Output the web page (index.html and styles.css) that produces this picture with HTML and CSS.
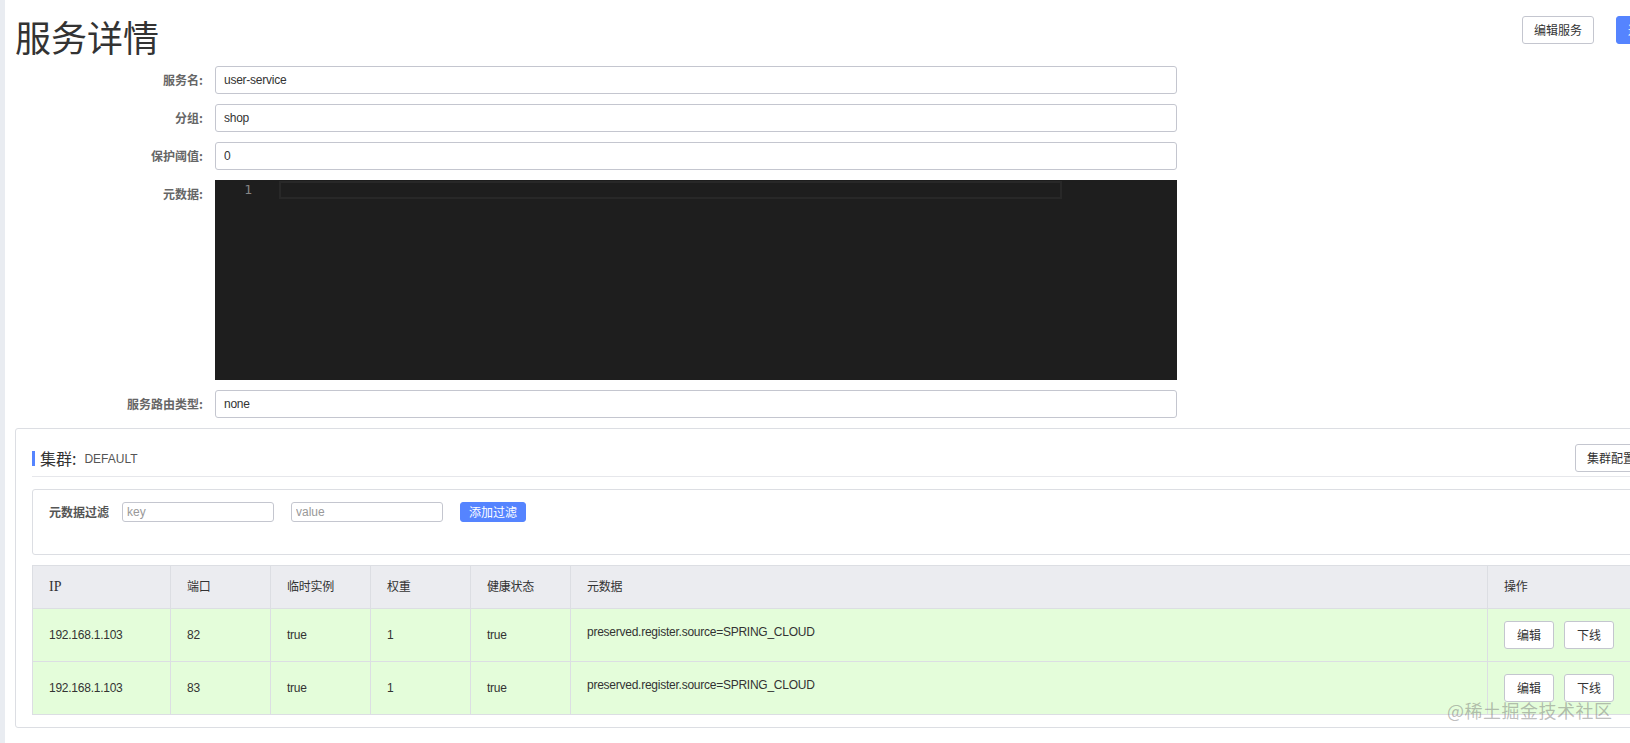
FILE: index.html
```html
<!DOCTYPE html>
<html lang="zh-CN">
<head>
<meta charset="utf-8">
<title>服务详情</title>
<link rel="stylesheet" href="styles.css">
</head>
<body>
<div class="layout">
  <div class="sidebar"></div>
  <main class="main">
    <header class="page-header">
      <h1 class="page-title">服务详情</h1>
      <div class="header-actions">
        <button class="btn" type="button">编辑服务</button>
        <button class="btn btn-primary" type="button">返回</button>
      </div>
    </header>

    <form class="detail-form">
      <div class="form-row">
        <label class="form-label">服务名:</label>
        <input class="text-input" value="user-service" readonly>
      </div>
      <div class="form-row">
        <label class="form-label">分组:</label>
        <input class="text-input" value="shop" readonly>
      </div>
      <div class="form-row">
        <label class="form-label">保护阈值:</label>
        <input class="text-input" value="0" readonly>
      </div>
      <div class="form-row">
        <label class="form-label">元数据:</label>
        <div class="editor">
          <div class="editor-gutter">1</div>
          <div class="editor-lines">
            <div class="editor-current-line"></div>
          </div>
        </div>
      </div>
      <div class="form-row">
        <label class="form-label">服务路由类型:</label>
        <input class="text-input" value="none" readonly>
      </div>
    </form>

    <section class="cluster-panel">
      <div class="cluster-header">
        <div class="cluster-title">
          <span class="title-bar"></span>
          <span class="title-main">集群:</span>
          <span class="title-sub">DEFAULT</span>
        </div>
        <button class="btn" type="button">集群配置</button>
      </div>

      <div class="filter-box">
        <span class="filter-label">元数据过滤</span>
        <input class="filter-input" placeholder="key">
        <input class="filter-input" placeholder="value">
        <button class="btn-small" type="button">添加过滤</button>
      </div>

      <table class="instance-table">
        <colgroup>
          <col class="col-ip">
          <col class="col-std">
          <col class="col-std">
          <col class="col-std">
          <col class="col-std">
          <col class="col-meta">
          <col class="col-ops">
        </colgroup>
        <thead>
          <tr>
            <th class="th-serif">IP</th>
            <th>端口</th>
            <th>临时实例</th>
            <th>权重</th>
            <th>健康状态</th>
            <th>元数据</th>
            <th>操作</th>
          </tr>
        </thead>
        <tbody>
          <tr class="row-healthy">
            <td>192.168.1.103</td>
            <td>82</td>
            <td>true</td>
            <td>1</td>
            <td>true</td>
            <td class="td-meta">preserved.register.source=SPRING_CLOUD</td>
            <td class="td-ops"><button class="btn btn-op" type="button">编辑</button><button class="btn btn-op" type="button">下线</button></td>
          </tr>
          <tr class="row-healthy">
            <td>192.168.1.103</td>
            <td>83</td>
            <td>true</td>
            <td>1</td>
            <td>true</td>
            <td class="td-meta">preserved.register.source=SPRING_CLOUD</td>
            <td class="td-ops"><button class="btn btn-op" type="button">编辑</button><button class="btn btn-op" type="button">下线</button></td>
          </tr>
        </tbody>
      </table>
    </section>
  </main>
</div>
<div class="watermark">@稀土掘金技术社区</div>
</body>
</html>
```

FILE: styles.css
```css
html, body {
  margin: 0;
  padding: 0;
  overflow: hidden;
  background: #fff;
}

body {
  font-family: "Liberation Sans", "Noto Sans CJK SC", sans-serif;
  font-size: 12px;
  color: #333;
  position: relative;
  min-height: 743px;
}

.layout {
  display: flex;
  min-height: 743px;
}

.sidebar {
  width: 5px;
  flex: 0 0 5px;
  background: #e9ecf1;
}

.main {
  flex: 0 0 1649px;
  width: 1649px;
  padding-left: 10px;
}

/* header */
.page-header {
  display: flex;
  justify-content: space-between;
  align-items: flex-start;
  padding-top: 16px;
}

.page-title {
  margin: 2px 0 0;
  font-family: "Noto Sans CJK SC", sans-serif;
  font-size: 36px;
  line-height: 36px;
  font-weight: normal;
  color: #333;
}

.header-actions {
  display: flex;
  gap: 22px;
}

.btn {
  height: 28px;
  padding: 0 11px;
  border: 1px solid #c4c6cf;
  border-radius: 3px;
  background: #fff;
  color: #333;
  font-family: "Noto Sans CJK SC", sans-serif;
  font-size: 12px;
  line-height: 26px;
  cursor: pointer;
  box-sizing: border-box;
}

.btn-primary {
  background: #5584ff;
  border-color: #5584ff;
  color: #fff;
}

/* form */
.detail-form {
  margin-top: 12px;
}

.form-row {
  display: flex;
  align-items: flex-start;
  margin-bottom: 10px;
}

.form-label {
  width: 200px;
  flex: 0 0 200px;
  box-sizing: border-box;
  padding-right: 12px;
  text-align: right;
  line-height: 28px;
  color: #666;
  font-weight: bold;
  font-family: "Noto Sans CJK SC", sans-serif;
}

.text-input {
  width: 962px;
  height: 28px;
  box-sizing: border-box;
  padding: 0 8px;
  border: 1px solid #c4c6cf;
  border-radius: 3px;
  font-family: "Liberation Sans", "Noto Sans CJK SC", sans-serif;
  font-size: 12px;
  letter-spacing: -0.25px;
  color: #333;
  outline: none;
  background: #fff;
}

.editor {
  width: 962px;
  height: 200px;
  background: #1e1e1e;
  display: flex;
}

.editor-gutter {
  width: 64px;
  flex: 0 0 64px;
  box-sizing: border-box;
  padding: 1px 27px 0 0;
  text-align: right;
  font-family: "DejaVu Sans Mono", monospace;
  font-size: 13px;
  line-height: 18px;
  color: #858585;
}

.editor-lines {
  padding-top: 1px;
}

.editor-current-line {
  width: 783px;
  height: 18px;
  box-sizing: border-box;
  border: 2px solid #282828;
}

/* cluster panel */
.cluster-panel {
  border: 1px solid #dcdee3;
  border-radius: 3px;
  padding: 15px 16px 12px;
}

.cluster-header {
  display: flex;
  justify-content: space-between;
  align-items: flex-start;
  padding-bottom: 4px;
  border-bottom: 1px solid #e6e7eb;
}

.cluster-title {
  display: flex;
  align-items: center;
  height: 24px;
  margin-top: 2px;
}

.title-bar {
  width: 3px;
  height: 15px;
  background: #5584ff;
  margin-right: 5px;
}

.title-main {
  font-family: "Noto Sans CJK SC", sans-serif;
  font-size: 16px;
  color: #333;
}

.title-sub {
  margin-left: 8px;
  margin-top: 2px;
  font-size: 12px;
  color: #555;
}

.filter-box {
  margin-top: 12px;
  border: 1px solid #dcdee3;
  border-radius: 3px;
  padding: 12px 16px 32px;
  display: flex;
  align-items: center;
}

.filter-label {
  line-height: 20px;
  color: #555;
  font-weight: bold;
  font-family: "Noto Sans CJK SC", sans-serif;
  margin-right: 13px;
}

.filter-input {
  width: 152px;
  height: 20px;
  box-sizing: border-box;
  padding: 0 4px;
  border: 1px solid #c4c6cf;
  border-radius: 3px;
  font-family: "Liberation Sans", sans-serif;
  font-size: 12px;
  color: #333;
  margin-right: 17px;
  outline: none;
}

.filter-input::placeholder {
  color: #999;
}

.btn-small {
  height: 20px;
  padding: 0 8px;
  border: 1px solid #5584ff;
  border-radius: 3px;
  background: #5584ff;
  color: #fff;
  font-family: "Noto Sans CJK SC", sans-serif;
  font-size: 12px;
  line-height: 18px;
  box-sizing: border-box;
}

/* table */
.instance-table {
  margin-top: 10px;
  width: 100%;
  border-collapse: collapse;
  table-layout: fixed;
  border: 1px solid #dcdee3;
}

.col-ip { width: 138px; }
.col-std { width: 100px; }
.col-meta { width: 917px; }
.col-ops { width: auto; }

.instance-table th,
.instance-table td {
  border: 1px solid #dcdee3;
  padding: 12px 16px;
  text-align: left;
  font-size: 12px;
  line-height: 18px;
  letter-spacing: -0.25px;
  color: #333;
  font-weight: normal;
  font-family: "Liberation Sans", "Noto Sans CJK SC", sans-serif;
  vertical-align: middle;
  white-space: nowrap;
}

.instance-table th {
  background: #ebecf0;
}

.instance-table th.th-serif {
  font-family: "Liberation Serif", serif;
  font-size: 14px;
  letter-spacing: 0;
}

.row-healthy td {
  background: #e4fdda;
}

.instance-table td.td-meta {
  vertical-align: top;
  padding-top: 14px;
}

.td-ops {
  font-size: 0;
}

.btn-op {
  width: 50px;
  padding: 0;
  margin-right: 10px;
  letter-spacing: 0;
}

/* watermark overlay */
.watermark {
  position: absolute;
  left: 1447px;
  top: 699px;
  font-family: "Noto Sans CJK SC", sans-serif;
  font-size: 18px;
  line-height: 22px;
  color: rgba(110, 110, 110, 0.45);
  white-space: nowrap;
  letter-spacing: 0.5px;
}
```
